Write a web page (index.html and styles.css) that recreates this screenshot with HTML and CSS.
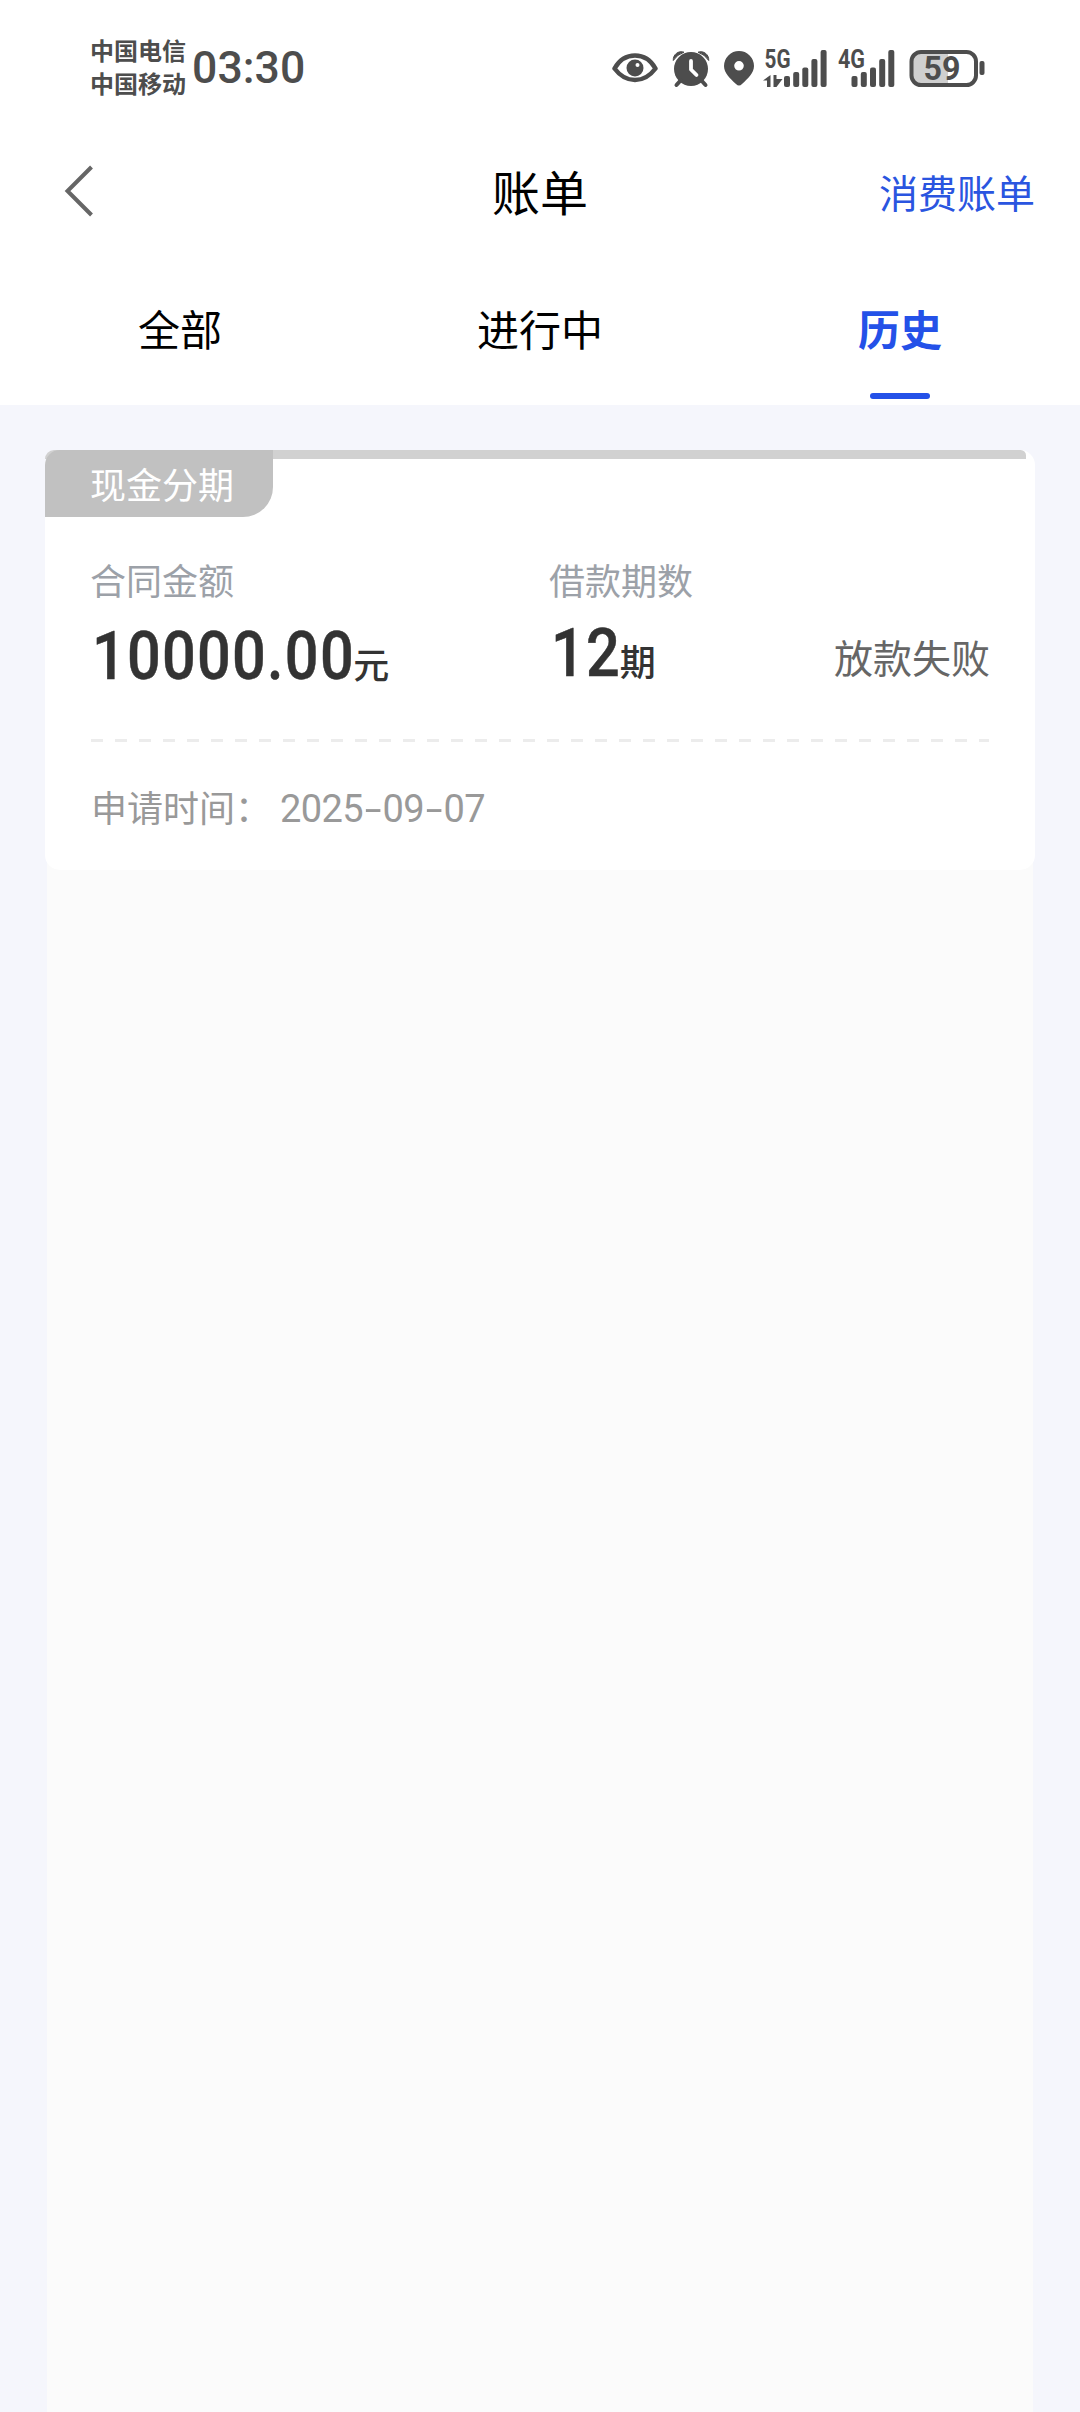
FILE: index.html
```html
<!DOCTYPE html>
<html lang="zh-CN">
<head>
<meta charset="utf-8">
<meta name="viewport" content="width=device-width, initial-scale=1">
<title>账单</title>
<link rel="stylesheet" href="styles.css">
</head>
<body>
<header class="top">
  <div class="status">
    <div class="carriers"><span>中国电信</span><span>中国移动</span></div>
    <div class="clock">03:30</div>
    <div class="indicators">
      <svg class="eye" width="46" height="40" viewBox="0 0 46 40">
        <path d="M2.5 20.5C7 12.5 14 7.500 23 7.500S39 12.500 43.500 20.500C39 26.500 32 32 23 32S7 26.500 2.500 20.500Z" fill="none" stroke="#4d4d4d" stroke-width="4.500" stroke-linejoin="round"/>
        <circle cx="23" cy="20" r="8.500"/><circle cx="25.500" cy="17" r="2" fill="#fff"/>
      </svg>
      <svg class="alarm" width="38" height="40" viewBox="0 0 38 40">
        <path d="M1.300 12.500A8 8 0 0 1 12 4.200A20 20 0 0 0 1.300 12.500ZM36.700 12.500A8 8 0 0 0 26 4.200A20 20 0 0 1 36.700 12.500Z" stroke="#4d4d4d" stroke-width="1"/>
        <circle cx="19" cy="21" r="17"/>
        <path d="M9 32L4.500 37M29 32L33.500 37" stroke="#4d4d4d" stroke-width="4" stroke-linecap="round"/>
        <path d="M19 13V21.500L24.500 27" fill="none" stroke="#fff" stroke-width="3.800" stroke-linecap="round" stroke-linejoin="round"/>
      </svg>
      <svg class="pin" width="30" height="40" viewBox="0 0 30 40">
        <path fill-rule="evenodd" d="M15 3A15 15 0 0 0 0 18C0 25 6 30.500 12 36Q15 39 18 36C24 30.500 30 25 30 18A15 15 0 0 0 15 3ZM15 13A4.800 4.800 0 1 1 15 22.600A4.800 4.800 0 1 1 15 13Z"/>
      </svg>
      <svg class="signal5" width="63" height="56" viewBox="0 -8 63 56">
        <text x="0.500" y="20" textLength="26" lengthAdjust="spacingAndGlyphs">5G</text>
        <path d="M-1 32.500L6.500 27V39H3V32.500ZM9.500 27H12.500V31H18.500L12.500 39H9.500Z"/>
        <rect x="20" y="28" width="6" height="11" rx="2"/><rect x="29.200" y="24" width="6" height="15" rx="2"/><rect x="38.300" y="19.500" width="6" height="19.500" rx="2"/><rect x="47.400" y="11" width="6" height="28" rx="2"/><rect x="56.600" y="2" width="6" height="37" rx="2"/>
      </svg>
      <svg class="signal4" width="57" height="56" viewBox="0 -8 57 56">
        <text x="0" y="20" textLength="27" lengthAdjust="spacingAndGlyphs">4G</text>
        <rect x="13.500" y="28" width="6" height="11" rx="2"/><rect x="22.800" y="24" width="6" height="15" rx="2"/><rect x="32" y="19.500" width="6" height="19.500" rx="2"/><rect x="41.200" y="11" width="6" height="28" rx="2"/><rect x="50.300" y="2" width="6" height="37" rx="2"/>
      </svg>
      <svg class="battery" width="76" height="40" viewBox="0 0 76 40">
        <path d="M39 4H12A10 10 0 0 0 2 14V27A10 10 0 0 0 12 37H39Z" fill="#cfcfcf"/>
        <rect x="2.500" y="4" width="64.500" height="33" rx="9.500" fill="none" stroke="#4d4d4d" stroke-width="4"/>
        <rect x="70.500" y="13" width="5" height="14" rx="2"/>
        <text class="level" x="14.500" y="31.500" textLength="37" lengthAdjust="spacingAndGlyphs">59</text>
      </svg>
    </div>
  </div>
  <div class="nav">
    <svg class="back" width="30" height="52" viewBox="0 0 30 52"><path d="M27.500 2L3.500 26L27.500 50" fill="none" stroke="#666" stroke-width="4"/></svg>
    <h1>账单</h1>
    <a class="consume">消费账单</a>
  </div>
  <nav class="tabs">
    <a>全部</a><a>进行中</a><a class="active">历史</a>
  </nav>
</header>
<main class="list">
  <article class="card">
    <div class="strip"><span class="tag">现金分期</span></div>
    <div class="details">
      <div class="amount"><p class="label">合同金额</p><p class="value"><b>10000.00</b>元</p></div>
      <div class="periods"><p class="label">借款期数</p><p class="value"><b>12</b>期</p></div>
      <div class="state">放款失败</div>
    </div>
    <div class="divider"></div>
    <div class="applied"><span>申请时间<span class="colon">：</span></span><time>2025<i>-</i>09<i>-</i>07</time></div>
  </article>
</main>
</body>
</html>
```
FILE: styles.css
```css
* { box-sizing: border-box; margin: 0; padding: 0; }
body {
  min-height: 2412px;
  display: flex;
  flex-direction: column;
  background: #f5f6fc;
  font-family: "Noto Sans CJK SC", sans-serif;
  color: #000;
}
.top { height: 405px; background: #fff; }
.status {
  height: 135px;
  padding: 0 95px 0 90px;
  display: flex;
  align-items: center;
  color: #4d4d4d;
}
.carriers {
  display: flex;
  flex-direction: column;
  width: 102px;
  padding-bottom: 4px;
  font-size: 24px;
  font-weight: 700;
  line-height: 33px;
}
.clock {
  font: 500 44.5px/50px Roboto, sans-serif;
  letter-spacing: 0.1px;
}
.indicators {
  display: flex;
  align-items: center;
  margin-left: auto;
  fill: #4d4d4d;
}
.indicators text { font: 700 25px Roboto, sans-serif; }
.indicators .level { font-size: 33px; font-weight: 700; }
.alarm { margin-left: 14px; }
.pin { margin-left: 14px; }
.signal5 { margin-left: 10px; overflow: visible; }
.signal4 { margin-left: 11px; }
.battery { margin-left: 14px; }
.nav {
  height: 114px;
  padding: 0 45px 2px 63px;
  display: grid;
  grid-template-columns: 1fr auto 1fr;
  align-items: center;
}
.back { margin-left: 1px; }
.nav h1 { margin: 0 18px 2px 0; font-size: 48px; font-weight: 400; line-height: 70px; }
.consume { justify-self: end; font-size: 39px; line-height: 56px; color: #2a55e0; }
.tabs {
  height: 156px;
  display: grid;
  grid-template-columns: repeat(3, 1fr);
}
.tabs a {
  padding-top: 48px;
  font-size: 42px;
  line-height: 62px;
  text-align: center;
}
.tabs .active { color: #2451e8; font-weight: 700; }
.active::after {
  content: "";
  display: block;
  width: 60px;
  height: 6px;
  margin: 34px auto 0;
  border-radius: 3px;
  background: #2451e8;
}
.list {
  flex: 1;
  margin: 45px 45px 0;
  background: linear-gradient(#fbfbfb, #fbfbfb) 2px 410px / 986px 100% no-repeat;
}
.card {
  height: 420px;
  border-radius: 15px;
  background: #fff;
}
.strip {
  width: 981px;
  height: 9px;
  border-radius: 15px 9px 0 0;
  background: #d1d1d1;
}
.tag {
  display: block;
  width: 228px;
  height: 67px;
  padding-left: 45px;
  border-radius: 15px 0 30px 0;
  background: #c1c1c1;
  color: #fff;
  font-size: 36px;
  line-height: 67px;
}
.details {
  height: 280px;
  padding: 94px 45px 0;
  display: grid;
  grid-template-columns: 459px 1fr auto;
}
.label { font-size: 36px; line-height: 52px; color: #9ca1a8; }
.value {
  display: flex;
  align-items: baseline;
  height: 80px;
  margin-top: 12px;
  padding-left: 2px;
  font-size: 36px;
  font-weight: 500;
  line-height: 80px;
  color: #333;
}
/* Narrowed figures with open tracking */
.value b {
  margin-right: -31px;
  font: 500 66px/80px Roboto, sans-serif;
  letter-spacing: 1.4px;
  transform: scaleX(0.9);
  transform-origin: left;
  -webkit-text-stroke: 0.5px #333;
}
.periods .value { margin-top: 9px; }
.periods b { margin-right: -9px; }
.state { padding-top: 75px; font-size: 39px; line-height: 56px; color: #666; }
.divider {
  height: 3px;
  margin: 0 46px;
  background: repeating-linear-gradient(90deg, #ececec 0 12px, transparent 12px 24px);
}
.applied {
  display: flex;
  align-items: baseline;
  margin-top: 38px;
  padding-left: 46px;
  font-size: 36px;
  line-height: 52px;
  color: #999;
}
.applied time {
  margin-left: 9px;
  font: 400 38px/52px Roboto, sans-serif;
  letter-spacing: -0.6px;
}
.applied i {
  display: inline-block;
  width: 19.5px;
  font-style: normal;
  text-align: center;
  transform: scaleX(1.6);
}
```
